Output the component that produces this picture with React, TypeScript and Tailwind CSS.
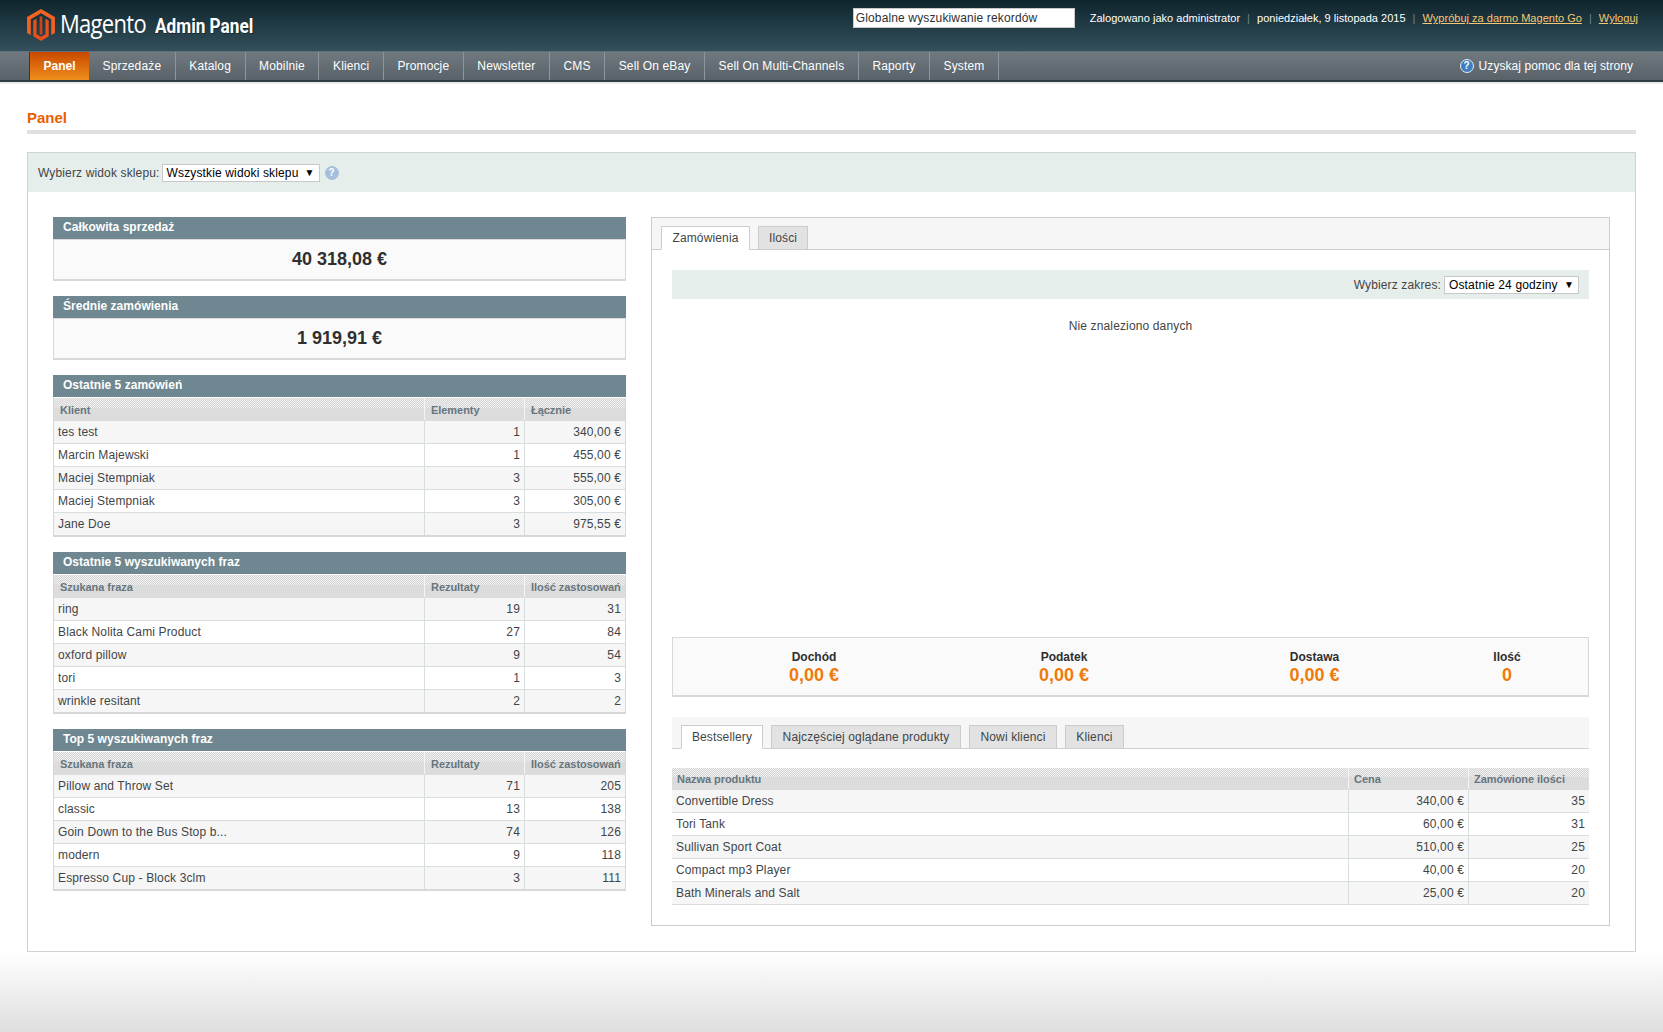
import type { ReactNode } from "react";

const navItems = [
	"Sprzedaże",
	"Katalog",
	"Mobilnie",
	"Klienci",
	"Promocje",
	"Newsletter",
	"CMS",
	"Sell On eBay",
	"Sell On Multi-Channels",
	"Raporty",
	"System",
];

const thBg =
	"bg-[linear-gradient(#0000_45%,#dcdcdc_45%),repeating-linear-gradient(135deg,#d4d4d4_0_0.707px,#f1f1f1_0.707px_1.414px)]";

type Row = [string, string, string];

const orders: Row[] = [
	["tes test", "1", "340,00 €"],
	["Marcin Majewski", "1", "455,00 €"],
	["Maciej Stempniak", "3", "555,00 €"],
	["Maciej Stempniak", "3", "305,00 €"],
	["Jane Doe", "3", "975,55 €"],
];

const lastSearches: Row[] = [
	["ring", "19", "31"],
	["Black Nolita Cami Product", "27", "84"],
	["oxford pillow", "9", "54"],
	["tori", "1", "3"],
	["wrinkle resitant", "2", "2"],
];

const topSearches: Row[] = [
	["Pillow and Throw Set", "71", "205"],
	["classic", "13", "138"],
	["Goin Down to the Bus Stop b...", "74", "126"],
	["modern", "9", "118"],
	["Espresso Cup - Block 3clm", "3", "111"],
];

const bestsellers: Row[] = [
	["Convertible Dress", "340,00 €", "35"],
	["Tori Tank", "60,00 €", "31"],
	["Sullivan Sport Coat", "510,00 €", "25"],
	["Compact mp3 Player", "40,00 €", "20"],
	["Bath Minerals and Salt", "25,00 €", "20"],
];

function Logo() {
	return (
		<svg width="28" height="32" viewBox="0 0 27 31" className="shrink-0">
			<path
				d="M13.5 0 27 7.8v15.4l-3.6 2.1V9.9L13.5 4.2 3.6 9.9v15.4L0 23.2V7.8Z"
				fill="#f26322"
			/>
			<path
				d="M6 11.2 9.2 9.4v15l4.3 2.4 4.3-2.4v-15l3.2 1.8v15.2L13.5 31 6 26.4Z"
				fill="#e8501c"
			/>
			<path d="M12.2 7.6 13.5 7l1.3.6v16.6l-1.3.7-1.3-.7Z" fill="#c9471a" />
		</svg>
	);
}

function HelpIcon({ light }: { light?: boolean }) {
	return (
		<span
			className={`flex h-[14px] w-[14px] shrink-0 items-center justify-center rounded-full border text-[10px] font-bold leading-none tracking-normal text-white ${
				light
					? "border-[#a9bfd8] bg-[#a4bedd]"
					: "border-[#e4edf6] bg-[#3f7fc0]"
			}`}
		>
			?
		</span>
	);
}

function FakeSelect({ label, className }: { label: string; className: string }) {
	return (
		<div
			className={`flex h-[18px] items-center justify-between border border-[#c8c8c8] bg-white pl-[4px] pr-[4px] text-[12px] text-black ${className}`}
		>
			<span>{label}</span>
			<span className="text-[10px]">▼</span>
		</div>
	);
}

function SectionHead({ children }: { children: ReactNode }) {
	return (
		<div className="h-[22px] bg-[#6f8790] pl-[10px] text-[12px] font-bold leading-[21px] tracking-[0.03px] text-white">
			{children}
		</div>
	);
}

function StatBox({ title, value }: { title: string; value: string }) {
	return (
		<section className="mb-[15px]">
			<SectionHead>{title}</SectionHead>
			<div className="flex h-[42px] items-center justify-center border border-b-2 border-[#d8d8d8] bg-[#fafafa] text-[18px] font-bold tracking-normal text-[#2f2f2f]">
				{value}
			</div>
		</section>
	);
}

function DataTable({
	heads,
	rows,
	widths,
	framed,
}: {
	heads: Row;
	rows: Row[];
	widths: [string, string, string];
	framed?: boolean;
}) {
	return (
		<table
			className={`w-full table-fixed border-separate border-spacing-0 text-[12px] text-[#3f4548] ${
				framed
					? "border-x border-b-2 border-t border-[#d8d8d8] border-t-white"
					: "border-b border-[#d8dee0]"
			}`}
		>
			<colgroup>
				<col className={widths[0]} />
				<col className={widths[1]} />
				<col className={widths[2]} />
			</colgroup>
			<thead>
				<tr className={`${framed ? "h-[22px]" : "h-[21px]"} ${thBg}`}>
					{heads.map((h, i) => (
						<th
							key={h}
							className={`pr-0 pt-[2px] text-left text-[11px] font-bold tracking-[-0.05px] text-[#67767e] ${
								framed ? "pl-[6px]" : "pl-[5px]"
							} ${i > 0 ? "border-l border-[#f4f4f4]" : ""}`}
						>
							{h}
						</th>
					))}
				</tr>
			</thead>
			<tbody>
				{rows.map((row, r) => (
					<tr
						key={`${row[0]}-${row[2]}`}
						className={`h-[23px] ${r % 2 === 0 ? "bg-[#f6f6f6]" : "bg-white"}`}
					>
						{row.map((cell, i) => (
							<td
								key={i}
								className={`border-t border-[#d8dee0] px-[4px] ${
									i > 0 ? "border-l text-right" : ""
								}`}
							>
								{cell}
							</td>
						))}
					</tr>
				))}
			</tbody>
		</table>
	);
}

function TableBox({
	title,
	heads,
	rows,
}: {
	title: string;
	heads: Row;
	rows: Row[];
}) {
	return (
		<section className="mb-[15px]">
			<SectionHead>{title}</SectionHead>
			<DataTable
				framed
				heads={heads}
				rows={rows}
				widths={["w-[370px]", "w-[100px]", "w-[101px]"]}
			/>
		</section>
	);
}

function Tab({
	children,
	active,
	className,
}: {
	children: ReactNode;
	active?: boolean;
	className: string;
}) {
	return (
		<div
			className={`-mb-px flex items-center justify-center border border-[#cccccc] text-[12px] text-[#3f4548] ${className} ${
				active ? "border-b-white bg-white" : "bg-[#e2e2e2]"
			}`}
		>
			{children}
		</div>
	);
}

function Stat({ label, value }: { label: string; value: string }) {
	return (
		<div className="text-center tracking-normal">
			<div className="text-[12px] font-bold leading-[14px] text-[#2f2f2f]">
				{label}
			</div>
			<div className="text-[18px] font-bold leading-[22px] text-[#f07a0c]">
				{value}
			</div>
		</div>
	);
}

export default function App() {
	return (
		<div className="flex min-h-[1032px] flex-col bg-white font-['Liberation_Sans',Arial,sans-serif] text-[12px] tracking-[0.14px] text-[#444]">
			<header className="flex h-[52px] items-start border-b border-[#5d6f77] bg-[linear-gradient(#0f252d,#33505c)] pl-[27px] pr-[25px]">
				<div className="flex items-center pt-[8px]">
					<Logo />
					<span className="ml-[5px] inline-block w-[86px] origin-left -translate-y-[2px] scale-x-[0.88] whitespace-nowrap font-['Open_Sans',sans-serif] text-[25px] leading-[32px] tracking-[-0.8px] text-white">
						Magento
					</span>
					<span className="ml-[9px] inline-block w-[98px] origin-left scale-x-[0.86] whitespace-nowrap pt-[2px] font-['Roboto',sans-serif] text-[20px] font-bold leading-[32px] tracking-normal text-white [text-shadow:1px_1px_0_#16282f]">
						Admin Panel
					</span>
				</div>
				<div className="ml-auto mr-[15px] mt-[8px] flex h-[20px] w-[222px] items-center border border-[#c8c8c8] bg-white pl-[2px] text-[12px] text-[#2f2f2f]">
					Globalne wyszukiwanie rekordów
				</div>
				<div className="flex items-center gap-[7px] pt-[11px] text-[11px] leading-[14px] tracking-[0.02px] text-white">
					<span>Zalogowano jako administrator</span>
					<span className="text-[#6f8790]">|</span>
					<span>poniedziałek, 9 listopada 2015</span>
					<span className="text-[#6f8790]">|</span>
					<a className="text-[#f5c875] underline">Wypróbuj za darmo Magento Go</a>
					<span className="text-[#6f8790]">|</span>
					<a className="text-[#f5c875] underline">Wyloguj</a>
				</div>
			</header>

			<nav className="flex h-[30px] border-b-2 border-[#2f3c42] bg-[linear-gradient(#6f797f,#586268)] pl-[29px] pr-[30px] text-[12px] text-white">
				<div className="flex items-center border-l border-[#7a1f00] bg-[linear-gradient(#c94800,#ef8f1c)] px-[13.5px] font-bold tracking-normal">
					Panel
				</div>
				{navItems.map((item) => (
					<div
						key={item}
						className="flex items-center border-r border-[#8d969b] px-[13.55px]"
					>
						{item}
					</div>
				))}
				<div className="ml-auto flex items-center gap-[5px] tracking-[0.06px]">
					<HelpIcon />
					<span>Uzyskaj pomoc dla tej strony</span>
				</div>
			</nav>

			<main className="border-t-2 border-[#ececec] px-[27px] pt-[25px]">
				<h1 className="border-b-4 border-[#e0e0e0] pb-[4px] text-[15px] font-bold leading-[17px] tracking-normal text-[#eb5e00]">
					Panel
				</h1>

				<div className="mt-[18px] border border-[#cfd3d3]">
					<div className="flex h-[39px] items-center gap-[2px] bg-[#e6eeec] pl-[10px]">
						<span>Wybierz widok sklepu:</span>
						<FakeSelect label="Wszystkie widoki sklepu" className="w-[158px]" />
						<span className="ml-[3px]">
							<HelpIcon light />
						</span>
					</div>

					<div className="flex gap-[25px] pb-[25px] pl-[25px] pr-[25px] pt-[25px]">
						<div className="w-[573px] shrink-0">
							<StatBox title="Całkowita sprzedaż" value="40 318,08 €" />
							<StatBox title="Średnie zamówienia" value="1 919,91 €" />
							<TableBox
								title="Ostatnie 5 zamówień"
								heads={["Klient", "Elementy", "Łącznie"]}
								rows={orders}
							/>
							<TableBox
								title="Ostatnie 5 wyszukiwanych fraz"
								heads={["Szukana fraza", "Rezultaty", "Ilość zastosowań"]}
								rows={lastSearches}
							/>
							<TableBox
								title="Top 5 wyszukiwanych fraz"
								heads={["Szukana fraza", "Rezultaty", "Ilość zastosowań"]}
								rows={topSearches}
							/>
						</div>

						<div className="min-w-0 flex-1 border border-[#cccccc]">
							<div className="flex h-[32px] items-end gap-[8px] border-b border-[#cccccc] bg-[#f6f6f6] pl-[9px]">
								<Tab active className="h-[24px] w-[89px]">
									Zamówienia
								</Tab>
								<Tab className="h-[24px] w-[50px]">Ilości</Tab>
							</div>

							<div className="px-[20px] pb-[20px] pt-[20px]">
								<div className="flex h-[29px] items-center justify-end gap-[3px] bg-[#e6eeec] pr-[10px]">
									<span>Wybierz zakres:</span>
									<FakeSelect label="Ostatnie 24 godziny" className="w-[135px]" />
								</div>
								<div className="h-[338px] pt-[18px] text-center">
									Nie znaleziono danych
								</div>

								<div className="grid h-[60px] grid-cols-[250px_250px_251px_134px] items-center border border-b-2 border-[#d8d8d8] bg-[#fafafa] px-[16px] pt-[2px]">
									<Stat label="Dochód" value="0,00 €" />
									<Stat label="Podatek" value="0,00 €" />
									<Stat label="Dostawa" value="0,00 €" />
									<Stat label="Ilość" value="0" />
								</div>

								<div className="mt-[20px] flex h-[32px] items-end gap-[8px] border-b border-[#cbd3d6] bg-[#f6f6f6] pl-[9px]">
									<Tab active className="h-[24px] w-[82px]">
										Bestsellery
									</Tab>
									<Tab className="h-[24px] w-[190px]">
										Najczęściej oglądane produkty
									</Tab>
									<Tab className="h-[24px] w-[88px]">Nowi klienci</Tab>
									<Tab className="h-[24px] w-[59px]">Klienci</Tab>
								</div>

								<div className="mt-[19px]">
									<DataTable
										heads={["Nazwa produktu", "Cena", "Zamówione ilości"]}
										rows={bestsellers}
										widths={["w-[676px]", "w-[120px]", "w-[121px]"]}
									/>
								</div>
							</div>
						</div>
					</div>
				</div>
			</main>

			<footer className="min-h-[80px] flex-1 bg-[linear-gradient(#ffffff,#dedede)]" />
		</div>
	);
}
